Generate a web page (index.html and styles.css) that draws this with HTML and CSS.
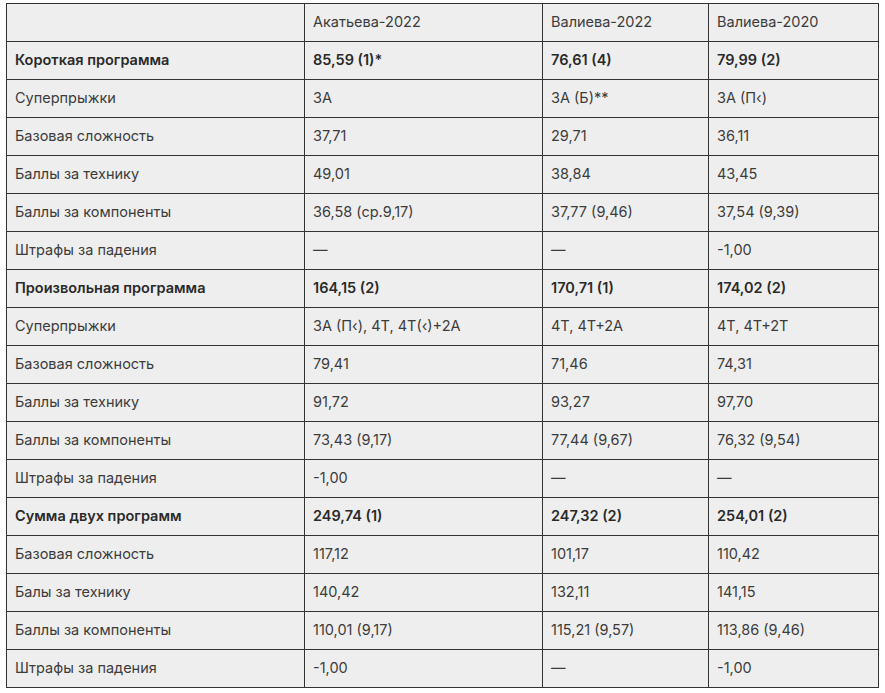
FILE: index.html
```html
<!DOCTYPE html>
<html lang="ru">
<head>
<meta charset="utf-8">
<link rel="stylesheet" href="styles.css">
</head>
<body>
<table class="scores">
  <colgroup>
    <col class="c1"><col class="c2"><col class="c3"><col class="c4">
  </colgroup>
  <tr><td></td><td>Акатьева-2022</td><td>Валиева-2022</td><td>Валиева-2020</td></tr>
  <tr class="bold"><td>Короткая программа</td><td>85,59 (1)*</td><td>76,61 (4)</td><td>79,99 (2)</td></tr>
  <tr><td>Суперпрыжки</td><td>3А</td><td>3А (Б)**</td><td>3А (П&lsaquo;)</td></tr>
  <tr><td>Базовая сложность</td><td>37,71</td><td>29,71</td><td>36,11</td></tr>
  <tr><td>Баллы за технику</td><td>49,01</td><td>38,84</td><td>43,45</td></tr>
  <tr><td>Баллы за компоненты</td><td>36,58 (ср.9,17)</td><td>37,77 (9,46)</td><td>37,54 (9,39)</td></tr>
  <tr><td>Штрафы за падения</td><td>—</td><td>—</td><td>-1,00</td></tr>
  <tr class="bold"><td>Произвольная программа</td><td>164,15 (2)</td><td>170,71 (1)</td><td>174,02 (2)</td></tr>
  <tr><td>Суперпрыжки</td><td>3А (П&lsaquo;), 4Т, 4Т(&lsaquo;)+2А</td><td>4Т, 4Т+2А</td><td>4Т, 4Т+2Т</td></tr>
  <tr><td>Базовая сложность</td><td>79,41</td><td>71,46</td><td>74,31</td></tr>
  <tr><td>Баллы за технику</td><td>91,72</td><td>93,27</td><td>97,70</td></tr>
  <tr><td>Баллы за компоненты</td><td>73,43 (9,17)</td><td>77,44 (9,67)</td><td>76,32 (9,54)</td></tr>
  <tr><td>Штрафы за падения</td><td>-1,00</td><td>—</td><td>—</td></tr>
  <tr class="bold"><td>Сумма двух программ</td><td>249,74 (1)</td><td>247,32 (2)</td><td>254,01 (2)</td></tr>
  <tr><td>Базовая сложность</td><td>117,12</td><td>101,17</td><td>110,42</td></tr>
  <tr><td>Балы за технику</td><td>140,42</td><td>132,11</td><td>141,15</td></tr>
  <tr><td>Баллы за компоненты</td><td>110,01 (9,17)</td><td>115,21 (9,57)</td><td>113,86 (9,46)</td></tr>
  <tr><td>Штрафы за падения</td><td>-1,00</td><td>—</td><td>-1,00</td></tr>
</table>
</body>
</html>
```

FILE: styles.css
```css
html, body {
  margin: 0;
  background: #ffffff;
}
body {
  padding: 3px 0 0 6px;
  font-family: Inter, "Noto Sans", sans-serif;
  font-size: 14.5px;
  color: #3c3c3c;
}
.scores {
  border-collapse: collapse;
  table-layout: fixed;
  width: 872px;
  background: #eeeeee;
}
.c1 { width: 298px; }
.c2 { width: 238px; }
.c3 { width: 166px; }
.c4 { width: 170px; }
.scores td {
  border: 1px solid #333333;
  height: 38px;
  padding: 0 8px 2px;
  box-sizing: border-box;
  vertical-align: middle;
  white-space: nowrap;
}
.scores tr.bold td {
  font-weight: 600;
  color: #2a2a2a;
}
```
